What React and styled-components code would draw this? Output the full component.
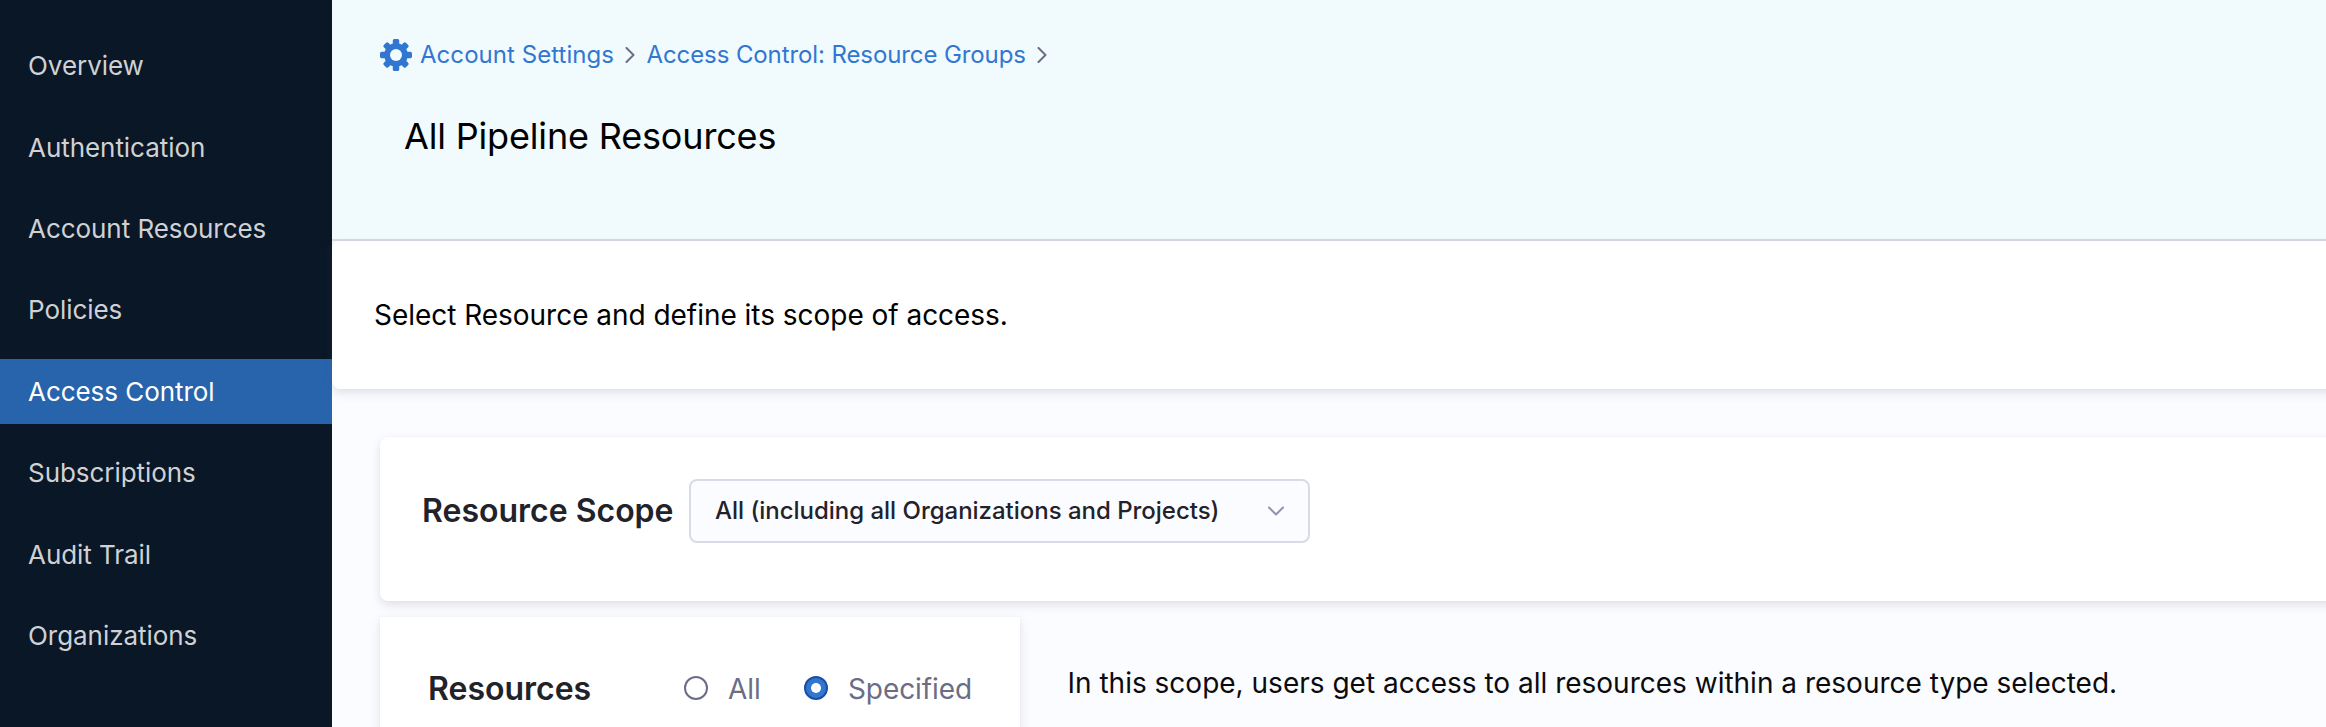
import React from "react";
import styled, { createGlobalStyle } from "styled-components";

const GlobalStyle = createGlobalStyle`
  *, *::before, *::after { box-sizing: border-box; }
  body {
    margin: 0;
    font-family: Inter, "Liberation Sans", sans-serif;
    color: #000;
    overflow: hidden;
  }
`;

const cardShadow = "0 0 2px rgba(40, 41, 61, 0.04), 0 4px 10px rgba(96, 97, 112, 0.17)";

const Page = styled.div`
  display: flex;
  height: 100vh;
  background: #fbfcff;
  overflow: hidden;
`;

const Sidebar = styled.nav`
  flex: none;
  width: 332px;
  display: flex;
  flex-direction: column;
  gap: 16px;
  padding-top: 33.2px;
  background: #0a1727;
`;

const NavItem = styled.a`
  flex: none;
  height: 65.4px;
  padding-left: 28px;
  font-size: 26px;
  line-height: 65.4px;
  letter-spacing: -0.05px;
  color: ${(p) => (p.$active ? "#ffffff" : "#cfd1d4")};
  background: ${(p) => (p.$active ? "#2864ac" : "transparent")};
`;

const Main = styled.main`
  flex: 1;
  min-width: 0;
  display: flex;
  flex-direction: column;
`;

const Header = styled.header`
  flex: none;
  height: 241px;
  padding: 39px 48px 0;
  background: #f1fafd;
  border-bottom: 2px solid #d9dae5;
`;

const Breadcrumbs = styled.div`
  display: flex;
  align-items: center;
  height: 32px;
`;

const Crumb = styled.a`
  margin-left: ${(p) => p.$gap}px;
  font-size: 24px;
  line-height: 30px;
  letter-spacing: ${(p) => p.$tracking || 0}px;
  color: #3177d1;
  white-space: nowrap;
`;

const CrumbArrow = styled.svg`
  flex: none;
  width: 10px;
  height: 16px;
  margin-left: ${(p) => p.$gap}px;
`;

const Title = styled.h1`
  margin: 43px 0 0 24px;
  font-size: 36px;
  font-weight: 400;
  line-height: 44px;
  letter-spacing: -0.17px;
`;

const Intro = styled.section`
  flex: none;
  display: flex;
  align-items: center;
  height: 148px;
  margin-right: -20px;
  padding-left: 42px;
  background: #fff;
  border-radius: 8px;
  box-shadow: ${cardShadow};
`;

const Text = styled.p`
  margin: 0;
  font-size: 28px;
  line-height: 36px;
  letter-spacing: ${(p) => p.$tracking || 0}px;
  white-space: nowrap;
`;

const Body = styled.div`
  display: flex;
  flex-direction: column;
  gap: 16px;
  padding: 48px 0 0 48px;
`;

const ScopeCard = styled.section`
  display: flex;
  align-items: flex-start;
  height: 164px;
  margin-right: -20px;
  padding: 42px 0 0 42px;
  background: #fff;
  border-radius: 8px;
  box-shadow: ${cardShadow};
`;

const Heading = styled.h2`
  margin: 0;
  font-size: 32px;
  font-weight: 600;
  line-height: 64px;
  color: #22222a;
  white-space: nowrap;
`;

const Select = styled.div`
  display: flex;
  align-items: center;
  justify-content: space-between;
  width: 621px;
  height: 64px;
  margin-left: 15.5px;
  padding: 0 24px 2px 24px;
  font-size: 24px;
  font-weight: 500;
  letter-spacing: -0.02px;
  color: #22222a;
  background: #fbfcff;
  border: 2px solid #d9dae5;
  border-radius: 8px;
`;

const Chevron = styled.svg`
  flex: none;
  width: 16px;
  height: 10px;
  margin-top: 2px;
`;

const ResourcesRow = styled.div`
  display: flex;
  align-items: flex-start;
`;

const ResourcesCard = styled.section`
  flex: none;
  display: flex;
  align-items: center;
  width: 640px;
  height: 142px;
  padding-left: 48px;
  background: #fff;
  box-shadow: ${cardShadow};
`;

const ResourcesHeading = styled(Heading)`
  padding-top: 2px;
`;

const RadioOption = styled.label`
  display: flex;
  align-items: center;
  gap: 20px;
  margin-left: ${(p) => p.$gap}px;
`;

const RadioLabel = styled.span`
  padding-top: 2px;
  font-size: 28px;
  line-height: 36px;
  letter-spacing: -0.08px;
  color: #6b6d85;
`;

const Radio = styled.span`
  display: flex;
  align-items: center;
  justify-content: center;
  width: 24px;
  height: 24px;
  border: 2px solid ${(p) => (p.$checked ? "#1b4fa3" : "#6b6d85")};
  border-radius: 50%;
  background: ${(p) => (p.$checked ? "#3177d1" : "#fff")};

  &::after {
    content: "";
    width: 10px;
    height: 10px;
    border-radius: 50%;
    background: #fff;
  }
`;

const Hint = styled(Text)`
  margin: 48px 0 0 47.5px;
  color: #0b0b0d;
`;

const GearIcon = () => (
  <svg width="32" height="32" viewBox="0 0 32 32" fill="#3177d1">
    {[0, 45, 90, 135].map((a) => (
      <rect key={a} x="12.8" y={a % 90 ? 0.4 : 0} width="6.4" height={a % 90 ? 31.2 : 32} rx="1.6" transform={`rotate(${a} 16 16)`} />
    ))}
    <circle cx="16" cy="16" r="11.8" />
    <circle cx="16" cy="16" r="6" fill="#f1fafd" />
  </svg>
);

const Arrow = ({ gap }) => (
  <CrumbArrow $gap={gap} viewBox="0 0 10 16" fill="none" stroke="#6b6d85" strokeWidth="2" strokeLinecap="round" strokeLinejoin="round">
    <path d="M1.5 1L8.5 8L1.5 15" />
  </CrumbArrow>
);

const navItems = [
  "Overview",
  "Authentication",
  "Account Resources",
  "Policies",
  "Access Control",
  "Subscriptions",
  "Audit Trail",
  "Organizations",
];

export default function App() {
  return (
    <>
      <GlobalStyle />
      <Page>
        <Sidebar>
          {navItems.map((name) => (
            <NavItem key={name} $active={name === "Access Control"}>
              {name}
            </NavItem>
          ))}
        </Sidebar>
        <Main>
          <Header>
            <Breadcrumbs>
              <GearIcon />
              <Crumb $gap={8} $tracking={0.05}>Account Settings</Crumb>
              <Arrow gap={11} />
              <Crumb $gap={11.5} $tracking={-0.1}>Access Control: Resource Groups</Crumb>
              <Arrow gap={11.5} />
            </Breadcrumbs>
            <Title>All Pipeline Resources</Title>
          </Header>
          <Intro>
            <Text $tracking={-0.03}>Select Resource and define its scope of access.</Text>
          </Intro>
          <Body>
            <ScopeCard>
              <Heading>Resource Scope</Heading>
              <Select>
                All (including all Organizations and Projects)
                <Chevron viewBox="0 0 16 10" fill="none" stroke="#9293ab" strokeWidth="2" strokeLinecap="round" strokeLinejoin="round">
                  <path d="M1 1.5L8 8.5L15 1.5" />
                </Chevron>
              </Select>
            </ScopeCard>
            <ResourcesRow>
              <ResourcesCard>
                <ResourcesHeading>Resources</ResourcesHeading>
                <RadioOption $gap={92.8}>
                  <Radio />
                  <RadioLabel>All</RadioLabel>
                </RadioOption>
                <RadioOption $gap={43.3}>
                  <Radio $checked />
                  <RadioLabel>Specified</RadioLabel>
                </RadioOption>
              </ResourcesCard>
              <Hint>In this scope, users get access to all resources within a resource type selected.</Hint>
            </ResourcesRow>
          </Body>
        </Main>
      </Page>
    </>
  );
}
